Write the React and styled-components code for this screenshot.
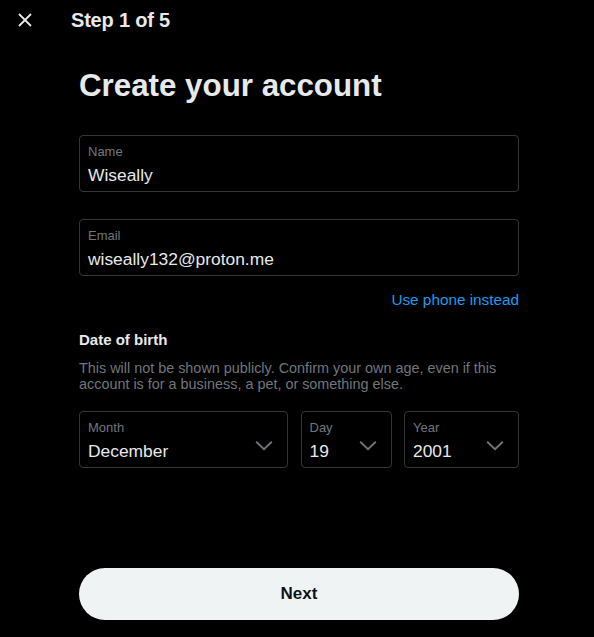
import React from "react";
import styled, { createGlobalStyle } from "styled-components";

const GlobalStyle = createGlobalStyle`
  html, body {
    margin: 0;
    padding: 0;
    background: #000;
  }
  body {
    font-family: "Liberation Sans", Arial, sans-serif;
    color: #e7e9ea;
  }
`;

const Page = styled.div`
  width: 594px;
  height: 637px;
  background: #000;
  display: flex;
  flex-direction: column;
  overflow: hidden;
`;

const Header = styled.div`
  height: 40px;
  display: flex;
  align-items: center;
  padding-left: 16px;
  gap: 37px;
`;

const CloseButton = styled.button`
  width: 18px;
  height: 18px;
  padding: 0;
  border: none;
  background: none;
  color: #e7e9ea;
  display: flex;
  align-items: center;
  justify-content: center;
`;

const StepTitle = styled.h2`
  margin: 0;
  font-size: 20px;
  font-weight: 700;
  letter-spacing: -0.2px;
  color: #e7e9ea;
`;

const Content = styled.div`
  flex: 1;
  display: flex;
  flex-direction: column;
  padding: 0 75px 0 79px;
`;

const Title = styled.h1`
  margin: 27px 0 0;
  font-size: 31.3px;
  line-height: 38px;
  font-weight: 700;
  color: #e7e9ea;
`;

const Field = styled.div`
  margin-top: ${(p) => p.$top || 0}px;
  height: 57px;
  box-sizing: border-box;
  border: 1px solid #333639;
  border-radius: 4px;
  padding: 8px 8px 0;
  display: flex;
  align-items: flex-start;
  justify-content: space-between;
  min-width: 0;
`;

const FieldText = styled.div`
  display: flex;
  flex-direction: column;
`;

const Label = styled.span`
  font-size: 13px;
  line-height: 16px;
  color: #71767b;
`;

const Value = styled.span`
  margin-top: 4px;
  font-size: 17.4px;
  line-height: 22px;
  color: #e7e9ea;
`;

const LinkRow = styled.div`
  display: flex;
  justify-content: flex-end;
  margin-top: 14px;
`;

const Link = styled.a`
  font-size: 15.3px;
  line-height: 20px;
  color: #1d9bf0;
  cursor: pointer;
`;

const SectionTitle = styled.div`
  margin-top: 20px;
  font-size: 15px;
  line-height: 20px;
  font-weight: 700;
  color: #e7e9ea;
`;

const Hint = styled.div`
  margin-top: 10px;
  font-size: 14.4px;
  line-height: 16px;
  color: #71767b;
`;

const DateRow = styled.div`
  margin-top: 19px;
  display: grid;
  grid-template-columns: 209px 91px 115px;
  justify-content: space-between;
`;

const Chevron = styled.span`
  color: #71767b;
  margin-top: 14px;
  margin-right: 4px;
  display: flex;
`;

const Footer = styled.div`
  padding: 0 75px 17px 79px;
`;

const NextButton = styled.button`
  width: 440px;
  height: 52px;
  border: none;
  border-radius: 26px;
  background: #eff3f4;
  color: #0f1419;
  font-family: inherit;
  font-size: 17px;
  font-weight: 700;
  cursor: pointer;
`;

const ChevronIcon = () => (
  <svg width="22" height="22" viewBox="0 0 24 24" fill="none">
    <path d="M3.5 8.5 12 16.5l8.5-8" stroke="currentColor" strokeWidth="2" />
  </svg>
);

const SelectField = ({ label, value }) => (
  <Field>
    <FieldText>
      <Label>{label}</Label>
      <Value>{value}</Value>
    </FieldText>
    <Chevron>
      <ChevronIcon />
    </Chevron>
  </Field>
);

export default function App() {
  return (
    <Page>
      <GlobalStyle />
      <Header>
        <CloseButton aria-label="Close">
          <svg width="18" height="18" viewBox="0 0 18 18">
            <path d="M3 3l12 12M15 3L3 15" stroke="currentColor" strokeWidth="1.8" />
          </svg>
        </CloseButton>
        <StepTitle>Step 1 of 5</StepTitle>
      </Header>
      <Content>
        <Title>Create your account</Title>
        <Field $top={30}>
          <FieldText>
            <Label>Name</Label>
            <Value>Wiseally</Value>
          </FieldText>
        </Field>
        <Field $top={27}>
          <FieldText>
            <Label>Email</Label>
            <Value>wiseally132@proton.me</Value>
          </FieldText>
        </Field>
        <LinkRow>
          <Link>Use phone instead</Link>
        </LinkRow>
        <SectionTitle>Date of birth</SectionTitle>
        <Hint>
          This will not be shown publicly. Confirm your own age, even if this
          account is for a business, a pet, or something else.
        </Hint>
        <DateRow>
          <SelectField label="Month" value="December" />
          <SelectField label="Day" value="19" />
          <SelectField label="Year" value="2001" />
        </DateRow>
      </Content>
      <Footer>
        <NextButton>Next</NextButton>
      </Footer>
    </Page>
  );
}
